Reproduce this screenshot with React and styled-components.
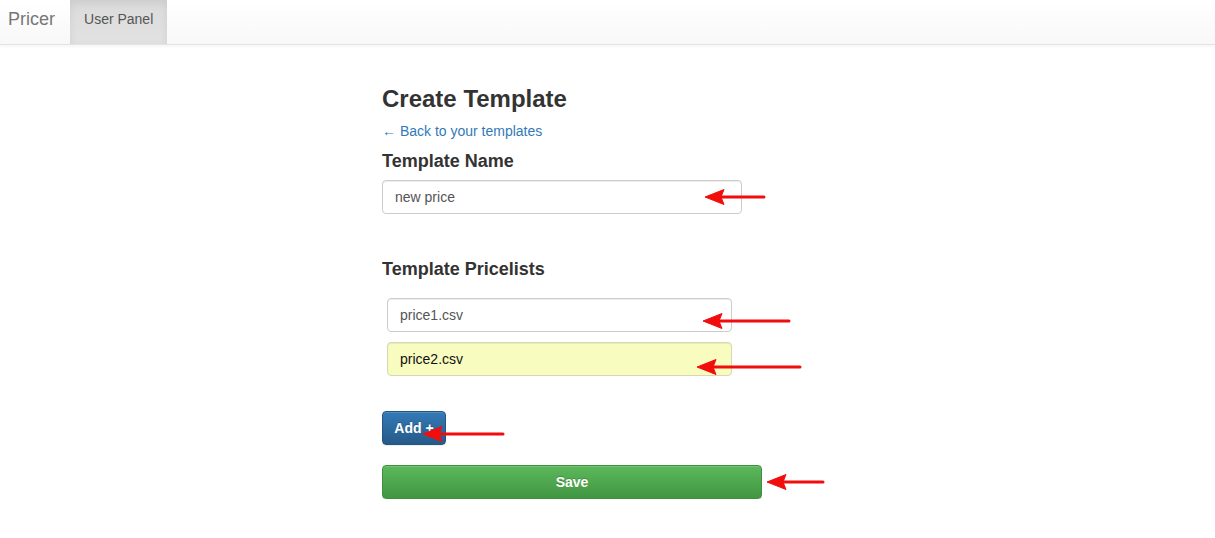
import styled, { createGlobalStyle } from "styled-components";

const GlobalStyle = createGlobalStyle`
  body {
    margin: 0;
    background: #fff;
    font-family: "Liberation Sans", Arial, sans-serif;
    font-size: 14px;
    color: #333;
  }
  * { box-sizing: border-box; }
`;

const arrows = [
  { tip: 705, tail: 764, y: 197 },
  { tip: 703, tail: 789, y: 321 },
  { tip: 697, tail: 800, y: 367 },
  { tip: 423, tail: 503, y: 434 },
  { tip: 767, tail: 823, y: 482 },
];

const Annotations = () => (
  <Overlay viewBox="0 0 1215 538">
    {arrows.map((a, i) => (
      <g key={i} fill="#f20d0d" stroke="#f20d0d">
        <line x1={a.tip + 14} y1={a.y} x2={a.tail} y2={a.y} strokeWidth="3" strokeLinecap="round" />
        <polygon points={`${a.tip},${a.y} ${a.tip + 19},${a.y - 7.5} ${a.tip + 16},${a.y} ${a.tip + 19},${a.y + 7.5}`} strokeWidth="1" strokeLinejoin="round" />
      </g>
    ))}
  </Overlay>
);

export default function App() {
  return (
    <>
      <GlobalStyle />
      <Navbar>
        <Brand>Pricer</Brand>
        <NavLink $active>User Panel</NavLink>
      </Navbar>
      <Main>
        <Title>Create Template</Title>
        <BackLink href="#">← Back to your templates</BackLink>
        <Label>Template Name</Label>
        <Input defaultValue="new price" />
        <Label $gap={45}>Template Pricelists</Label>
        <PriceList>
          <ListInput defaultValue="price1.csv" />
          <ListInput defaultValue="price2.csv" $filled />
        </PriceList>
        <AddButton>Add +</AddButton>
        <SaveButton>Save</SaveButton>
      </Main>
      <Annotations />
    </>
  );
}

const Overlay = styled.svg`
  position: absolute;
  top: 0;
  left: 0;
  width: 1215px;
  height: 538px;
  pointer-events: none;
`;
const Navbar = styled.nav`
  display: flex;
  align-items: stretch;
  height: 45px;
  background: linear-gradient(to bottom, #fff 0%, #f8f8f8 100%);
  border-bottom: 1px solid #e4e4e4;
  box-shadow: 0 1px 4px rgba(0, 0, 0, 0.06);
`;
const Brand = styled.a`
  padding: 8px 15px 0 8px;
  font-size: 18px;
  line-height: 22px;
  color: #777;
`;
const NavLink = styled.a`
  padding: 9px 14px 0;
  line-height: 20px;
  font-size: 14px;
  white-space: nowrap;
  color: #555;
  background: ${(p) =>
    p.$active ? "linear-gradient(to bottom, #dbdbdb 0%, #e2e2e2 100%)" : "none"};
  box-shadow: ${(p) => (p.$active ? "inset 0 3px 9px rgba(0,0,0,0.075)" : "none")};
`;
const Main = styled.main`
  display: flex;
  flex-direction: column;
  align-items: flex-start;
  padding-left: 382px;
`;
const Title = styled.h3`
  margin: 41px 0 0;
  font-size: 24px;
  line-height: 26px;
  font-weight: 600;
  color: #333;
`;
const BackLink = styled.a`
  margin-top: 9px;
  line-height: 20px;
  color: #337ab7;
  text-decoration: none;
`;
const Label = styled.label`
  margin-top: ${(p) => p.$gap || 10}px;
  font-size: 18px;
  line-height: 20px;
  font-weight: 600;
  color: #333;
`;
const Input = styled.input`
  margin-top: 9px;
  width: 360px;
  height: 34px;
  padding: 6px 12px;
  font: 14px "Liberation Sans", Arial, sans-serif;
  color: #555;
  background: ${(p) => (p.$filled ? "#f9fcbf" : "#fff")};
  border: 1px solid #ccc;
  border-radius: 4px;
  box-shadow: inset 0 1px 1px rgba(0, 0, 0, 0.075);
  outline: none;
`;
const PriceList = styled.div`
  display: flex;
  flex-direction: column;
  gap: 10px;
  margin-top: 19px;
  padding-left: 5px;
`;
const ListInput = styled(Input)`
  margin-top: 0;
  width: 345px;
  color: ${(p) => (p.$filled ? "#111" : "#555")};
  border-color: ${(p) => (p.$filled ? "#d5d8b5" : "#ccc")};
`;
const Button = styled.button`
  height: 34px;
  padding: 0;
  font: 600 14px "Liberation Sans", Arial, sans-serif;
  white-space: nowrap;
  text-align: center;
  color: #fff;
  border-radius: 4px;
  text-shadow: 0 -1px 0 rgba(0, 0, 0, 0.2);
  box-shadow: inset 0 1px 0 rgba(255, 255, 255, 0.15), 0 1px 1px rgba(0, 0, 0, 0.075);
`;
const AddButton = styled(Button)`
  margin-top: 35px;
  width: 64px;
  background: linear-gradient(to bottom, #337ab7 0%, #265a88 100%);
  border: 1px solid #245580;
`;
const SaveButton = styled(Button)`
  margin-top: 20px;
  width: 380px;
  background: linear-gradient(to bottom, #5cb85c 0%, #419641 100%);
  border: 1px solid #3e8f3e;
`;
